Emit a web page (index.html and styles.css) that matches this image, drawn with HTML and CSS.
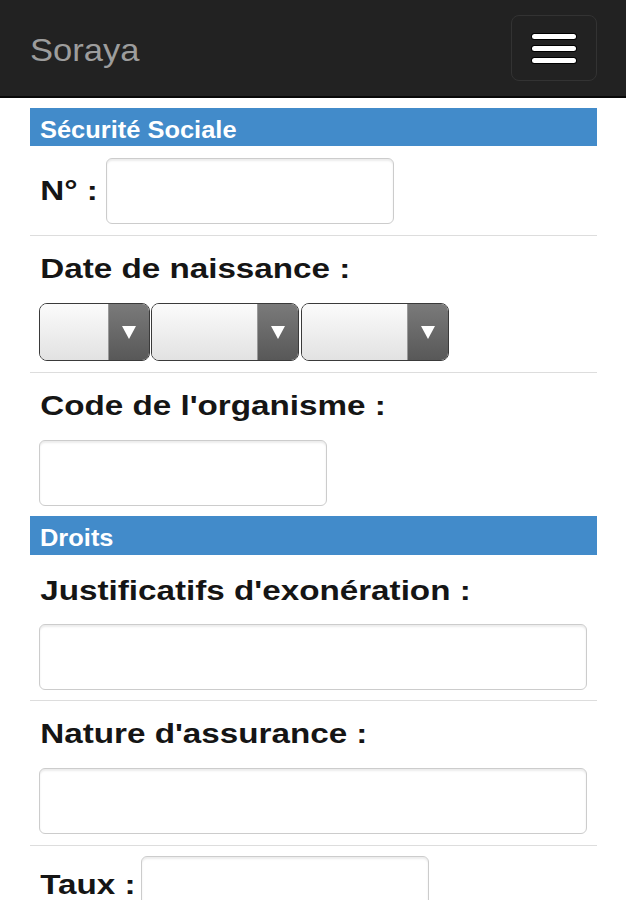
FILE: index.html
```html
<!DOCTYPE html>
<html lang="fr">
<head>
<meta charset="utf-8">
<title>Soraya</title>
<link rel="stylesheet" href="styles.css">
</head>
<body>
<nav class="navbar">
  <span class="brand">Soraya</span>
  <button class="toggle" type="button" aria-label="Menu">
    <span class="bar"></span><span class="bar"></span><span class="bar"></span>
  </button>
</nav>
<main class="container">
  <h2 class="section-title"><span class="title-text">Sécurité Sociale</span></h2>
  <div class="row row-inline row-first">
    <label class="label label-no">N° :</label>
    <input class="input input-short" type="text">
  </div>
  <div class="row row-date">
    <label class="label">Date de naissance :</label>
    <div class="selects">
      <div class="select sel-day"><span class="sel-field"></span><span class="sel-arrow"></span></div>
      <div class="select sel-month"><span class="sel-field"></span><span class="sel-arrow"></span></div>
      <div class="select sel-year"><span class="sel-field"></span><span class="sel-arrow"></span></div>
    </div>
  </div>
  <div class="row row-last">
    <label class="label">Code de l'organisme :</label>
    <input class="input input-short" type="text">
  </div>
  <h2 class="section-title section-title-2"><span class="title-text">Droits</span></h2>
  <div class="row row-after-title">
    <label class="label">Justificatifs d'exonération :</label>
    <input class="input input-full" type="text">
  </div>
  <div class="row row-nature">
    <label class="label">Nature d'assurance :</label>
    <input class="input input-full" type="text">
  </div>
  <div class="row row-inline row-taux">
    <label class="label label-taux">Taux :</label>
    <input class="input input-short" type="text">
  </div>
</main>
</body>
</html>
```
FILE: styles.css
```css
html, body {
  margin: 0;
  padding: 0;
  background: #fff;
  font-family: "Liberation Sans", Arial, sans-serif;
  color: #111;
  overflow: hidden;
}

.navbar {
  height: 96px;
  background: #222;
  border-bottom: 2px solid #080808;
  display: flex;
  align-items: center;
  justify-content: space-between;
  padding: 0 29px 0 30px;
}

.brand {
  font-size: 32px;
  color: #9d9d9d;
  margin-top: 4px;
  transform: scaleX(1.08);
  transform-origin: left center;
}

.toggle {
  width: 86px;
  height: 66px;
  background: transparent;
  border: 1px solid #333;
  border-radius: 8px;
  display: flex;
  flex-direction: column;
  align-items: center;
  justify-content: center;
  gap: 7px;
  padding: 0;
}

.bar {
  display: block;
  width: 44px;
  height: 5px;
  border-radius: 3px;
  background: #fff;
  box-shadow: 0 0 0 1px #000;
}

.container {
  padding: 10px 29px 0 30px;
}

.section-title {
  margin: 0;
  height: 38px;
  line-height: 44px;
  background: #428bca;
  color: #fff;
  font-size: 24px;
  font-weight: bold;
  padding-left: 10px;
}

.title-text {
  display: inline-block;
  transform: scaleX(1.06);
  transform-origin: left center;
}

.section-title-2 {
  height: 39px;
  line-height: 43px;
  margin-top: 10px;
}

.row {
  border-bottom: 1px solid #ddd;
  padding: 19px 10px 11px 9px;
}

.row-date {
  padding-top: 18px;
}

.row-last {
  border-bottom: none;
  padding-top: 18px;
  padding-bottom: 0;
}

.row-after-title {
  padding-top: 21px;
  padding-bottom: 10px;
}

.row-nature {
  padding-top: 18px;
}

.label {
  display: block;
  font-size: 27px;
  font-weight: bold;
  line-height: 30px;
  padding-left: 1px;
  color: #151515;
  transform: scaleX(1.23);
  transform-origin: left center;
}

.row-inline {
  display: flex;
  align-items: center;
  padding-top: 12px;
}

.row-inline .label {
  display: inline-block;
}

.label-no {
  margin-right: 19px;
}

.label-taux {
  margin-right: 23px;
  margin-top: 14px;
}

.row-first {
  padding-bottom: 11px;
}

.row-taux {
  border-bottom: none;
  align-items: flex-start;
  padding-top: 10px;
}

.input {
  display: block;
  box-sizing: border-box;
  height: 66px;
  border: 1px solid #ccc;
  border-radius: 6px;
  box-shadow: inset 0 2px 2px rgba(0, 0, 0, 0.08);
  background: #fff;
  margin: 19px 0 0;
  padding: 0;
}

.row-after-title .input {
  margin-top: 18px;
}

.row-inline .input {
  margin: 0;
}

.input-short {
  width: 288px;
}

.input-full {
  width: 548px;
}

.selects {
  display: flex;
  gap: 1px;
  margin-top: 19px;
}

.select {
  box-sizing: border-box;
  height: 58px;
  border: 1.5px solid #3a3a3a;
  border-radius: 8px;
  display: flex;
  overflow: hidden;
}

.sel-day { width: 111px; }
.sel-month { width: 148px; }
.sel-year { width: 148px; margin-left: 1px; }

.sel-field {
  flex: 1;
  background: linear-gradient(#fbfbfb, #e2e2e2);
  border-right: 1px solid #999;
}

.sel-arrow {
  width: 40px;
  background: linear-gradient(#7a7a7a, #585858);
  position: relative;
}

.sel-arrow::after {
  content: "";
  position: absolute;
  left: 50%;
  top: 50%;
  margin-left: -7px;
  margin-top: -6px;
  border-left: 7px solid transparent;
  border-right: 7px solid transparent;
  border-top: 13px solid #fff;
}
```
